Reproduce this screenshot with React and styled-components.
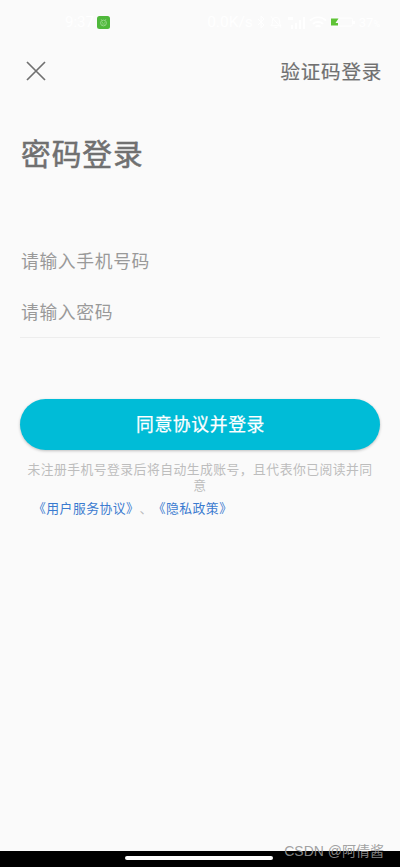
import styled, { createGlobalStyle } from 'styled-components';

const GlobalStyle = createGlobalStyle`
  * {
    box-sizing: border-box;
  }

  body {
    margin: 0;
    background: #fafafa;
    font-family: 'Noto Sans CJK SC', sans-serif;
    text-spacing-trim: space-all;
  }
`;

const Screen = styled.div`
  position: relative;
  display: flex;
  flex-direction: column;
  width: 400px;
  height: 867px;
  background: #fafafa;
  overflow: hidden;
`;

const StatusBar = styled.div`
  display: flex;
  justify-content: space-between;
  align-items: center;
  height: 44px;
  padding: 0 20px 0 65px;
  color: #fff;
  font-family: Roboto, sans-serif;
`;

const StatusGroup = styled.div`
  display: flex;
  align-items: center;
  gap: ${({ gap }) => gap}px;
`;

const StatusText = styled.span`
  font-size: ${({ size }) => size}px;
`;

const StatusUnit = styled.small`
  font-size: 9px;
`;

const Header = styled.header`
  display: flex;
  justify-content: space-between;
  align-items: center;
  height: 54px;
  padding: 0 18px 0 26px;
`;

const IconButton = styled.button`
  display: flex;
  padding: 0;
  border: none;
  background: none;
  cursor: pointer;
`;

const SwitchLink = styled.a`
  color: #707070;
  font-size: 19.5px;
  letter-spacing: 0.8px;
  line-height: 28px;
  -webkit-text-stroke: 0.2px #707070;
`;

const Title = styled.h1`
  margin: 32px 0 0 21px;
  color: #707070;
  font-size: 29.7px;
  font-weight: 400;
  letter-spacing: 1px;
  line-height: 46px;
  -webkit-text-stroke: 0.5px #707070;
`;

const Form = styled.form`
  display: flex;
  flex-direction: column;
  padding: 58px 20px 0;
`;

const Input = styled.input`
  width: 100%;
  height: 52px;
  padding: 0 0 ${({ divider }) => (divider ? 2 : 0)}px 1px;
  border: none;
  border-bottom: 1px solid ${({ divider }) => (divider ? '#ededed' : '#fafafa')};
  outline: none;
  background: transparent;
  color: #333;
  font-family: inherit;
  font-size: 17.8px;
  letter-spacing: 0.65px;

  &::placeholder {
    color: #999;
    opacity: 1;
  }
`;

const SubmitButton = styled.button`
  width: 360px;
  height: 51px;
  margin-top: 61px;
  padding: 0 0 3px 1px;
  border: none;
  border-radius: 26px;
  background: #00bcd7;
  color: #fff;
  font-family: inherit;
  font-size: 17.8px;
  letter-spacing: 0.65px;
  box-shadow: 0 1px 3px rgb(0 0 0 / 24%);
  -webkit-text-stroke: 0.25px #fff;
  cursor: pointer;
`;

const Notice = styled.p`
  margin: 11px 26px 0;
  color: #bdbdbd;
  font-size: 12.8px;
  letter-spacing: 0.48px;
  line-height: 16px;
  text-align: center;
`;

const Agreements = styled.div`
  margin: 6px 0 0 33px;
  color: #bdbdbd;
  font-size: 12.8px;
  letter-spacing: 0.5px;
  line-height: 18px;
`;

const AgreementLink = styled.a`
  color: #3a7bd0;
`;

const NavigationBar = styled.div`
  display: flex;
  justify-content: center;
  height: 16px;
  margin-top: auto;
  padding: 5px 2px 0 0;
  background: #000;
`;

const HomeIndicator = styled.div`
  width: 148px;
  height: 4px;
  border-radius: 2px;
  background: #fff;
`;

const Watermark = styled.span`
  position: absolute;
  right: 16px;
  bottom: 6px;
  color: rgb(150 150 150 / 90%);
  font-family: 'Liberation Sans', 'Noto Sans CJK SC', sans-serif;
  font-size: 14px;
  line-height: 20px;
`;

const AppBadge = () => (
  <svg width="13" height="13" viewBox="0 0 13 13" fill="none">
    <rect width="13" height="13" rx="2.5" fill="#4fb83b" />
    <circle cx="6.5" cy="7" r="2.9" stroke="#a5dc99" strokeWidth="0.8" />
    <path d="M4 3.2l1 1M9 3.2l-1 1M5 6.3h1M7.3 6.3h1M5.2 8h2.6" stroke="#a5dc99" strokeWidth="0.7" />
  </svg>
);

const BluetoothIcon = () => (
  <svg width="8" height="14" viewBox="0 0 8 14" fill="none" stroke="#fff">
    <path d="M1 4l6 6-3 3V1l3 3-6 6" />
  </svg>
);

const MuteIcon = () => (
  <svg width="14" height="14" viewBox="0 0 15 14" fill="none" stroke="#fff">
    <path d="M2 11h11l-1.5-2V6a4 4 0 0 0-8 0v3zM6 13h3M2 1l11 12" />
  </svg>
);

const SignalIcon = () => (
  <svg width="18" height="13" viewBox="0 0 18 13" fill="#fff">
    <path d="M1 1h5v3H1zM4 9h2v4H4zM8 7h2v6H8zM12 4h2v9h-2zM16 1h2v12h-2z" />
  </svg>
);

const WifiIcon = () => (
  <svg width="18" height="13" viewBox="0 0 19 13" fill="none" stroke="#fff" strokeWidth="1.8">
    <path d="M1 4.5a12 12 0 0 1 17 0M4 8a8 8 0 0 1 11 0M7 11a4 4 0 0 1 5 0" />
  </svg>
);

const BatteryIcon = () => (
  <svg width="24" height="10" viewBox="0 0 24 10">
    <rect x="0.5" y="1" width="21" height="8" rx="1.5" fill="none" stroke="#fff" />
    <path d="M0 1.5h7.5L4.5 6H7v2.5H0z" fill="#5fc336" />
    <path d="M22 4h2v3h-2z" fill="#fff" />
  </svg>
);

const CloseIcon = () => (
  <svg width="20" height="20" viewBox="0 0 20 20" fill="none" stroke="#707070" strokeWidth="1.7">
    <path d="M1 1l18 18M19 1L1 19" />
  </svg>
);

const App = () => (
  <>
    <GlobalStyle />
    <Screen>
      <StatusBar>
        <StatusGroup gap={3}>
          <StatusText size={15}>9:37</StatusText>
          <AppBadge />
        </StatusGroup>
        <StatusGroup gap={4}>
          <StatusText size={15.5}>0.0K/s</StatusText>
          <BluetoothIcon />
          <MuteIcon />
          <SignalIcon />
          <WifiIcon />
          <BatteryIcon />
          <StatusText size={13}>
            37<StatusUnit>%</StatusUnit>
          </StatusText>
        </StatusGroup>
      </StatusBar>
      <Header>
        <IconButton type="button" aria-label="关闭">
          <CloseIcon />
        </IconButton>
        <SwitchLink>验证码登录</SwitchLink>
      </Header>
      <Title>密码登录</Title>
      <Form onSubmit={(event) => event.preventDefault()}>
        <Input type="tel" placeholder="请输入手机号码" />
        <Input type="password" divider placeholder="请输入密码" />
        <SubmitButton type="submit">同意协议并登录</SubmitButton>
      </Form>
      <Notice>未注册手机号登录后将自动生成账号，且代表你已阅读并同意</Notice>
      <Agreements>
        <AgreementLink>《用户服务协议》</AgreementLink>
        、
        <AgreementLink>《隐私政策》</AgreementLink>
      </Agreements>
      <NavigationBar>
        <HomeIndicator />
      </NavigationBar>
      <Watermark>CSDN @阿倩酱</Watermark>
    </Screen>
  </>
);

export default App;
